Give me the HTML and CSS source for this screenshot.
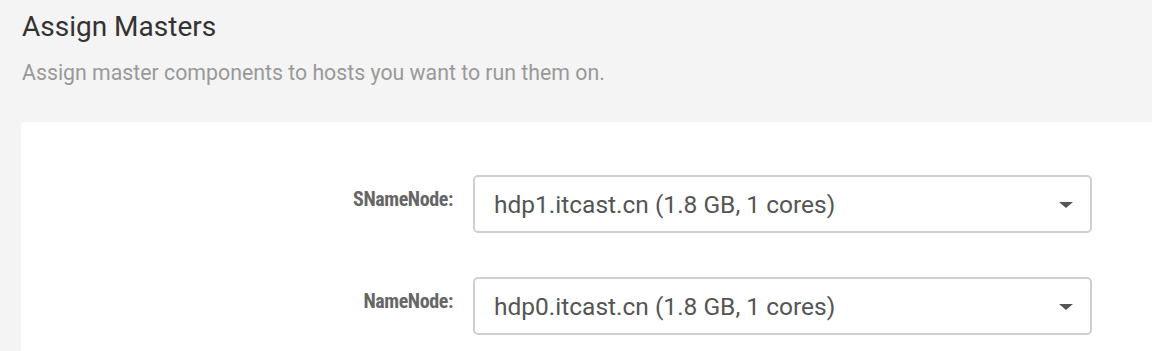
FILE: index.html
```html
<!DOCTYPE html>
<html lang="en">
<head>
    <meta charset="UTF-8">
    <title>Assign Masters</title>
    <link rel="stylesheet" href="styles.css">
</head>
<body>
    <div class="page">
        <!-- Step header -->
        <div class="step-header">
            <h2 class="step-title">Assign Masters</h2>
            <p class="step-desc">Assign master components to hosts you want to run them on.</p>
        </div>

        <!-- Master assignment form -->
        <div class="card">
            <div class="form-row">
                <label class="form-label" for="snamenode">SNameNode:</label>
                <div class="select-wrap">
                    <select id="snamenode" class="host-select">
                        <option>hdp1.itcast.cn (1.8 GB, 1 cores)</option>
                        <option>hdp0.itcast.cn (1.8 GB, 1 cores)</option>
                    </select>
                </div>
            </div>
            <div class="form-row">
                <label class="form-label" for="namenode">NameNode:</label>
                <div class="select-wrap">
                    <select id="namenode" class="host-select">
                        <option>hdp0.itcast.cn (1.8 GB, 1 cores)</option>
                        <option>hdp1.itcast.cn (1.8 GB, 1 cores)</option>
                    </select>
                </div>
            </div>
        </div>
    </div>
</body>
</html>
```

FILE: styles.css
```css
:root {
    --bg: #f4f4f4;
    --border: #cfcfd3;
    --text-dark: #333;
    --text-muted: #999;
}

body {
    margin: 0;
    padding: 0;
    background: var(--bg);
    font-family: Roboto, "Liberation Sans", sans-serif;
    overflow: hidden;
}

.page {
    display: flex;
    flex-direction: column;
    height: 100vh;
    padding-left: 21px;
}

.step-header {
    padding: 11px 0 0 1px;
}

.step-title {
    margin: 0;
    font-size: 28px;
    font-weight: 400;
    line-height: 32px;
    color: var(--text-dark);
}

.step-desc {
    margin: 18px 0 0;
    font-size: 21.3px;
    line-height: 24px;
    color: var(--text-muted);
}

.card {
    flex: 1;
    display: flex;
    flex-direction: column;
    gap: 44px;
    overflow: hidden;
    background: #fff;
    border-radius: 4px 0 0 0;
    margin-top: 37px;
    padding-top: 53px;
}

.form-row {
    display: grid;
    grid-template-columns: 432px 619px;
    column-gap: 20px;
    align-items: start;
}

.form-label {
    text-align: right;
    padding-top: 13px;
    font-size: 20px;
    font-weight: 700;
    font-stretch: 85%;
    letter-spacing: -0.4px;
    line-height: 22px;
    color: #666;
}

.select-wrap {
    position: relative;
}

.select-wrap::after {
    content: "";
    position: absolute;
    right: 19px;
    top: 27px;
    border-left: 7px solid transparent;
    border-right: 7px solid transparent;
    border-top: 6px solid #555;
    pointer-events: none;
}

.host-select {
    appearance: none;
    -webkit-appearance: none;
    display: block;
    width: 100%;
    height: 58px;
    padding: 0 40px 0 19px;
    border: 2px solid var(--border);
    border-radius: 5px;
    background: #fff;
    font-family: inherit;
    font-size: 24.5px;
    color: #555;
    outline: none;
}
```
